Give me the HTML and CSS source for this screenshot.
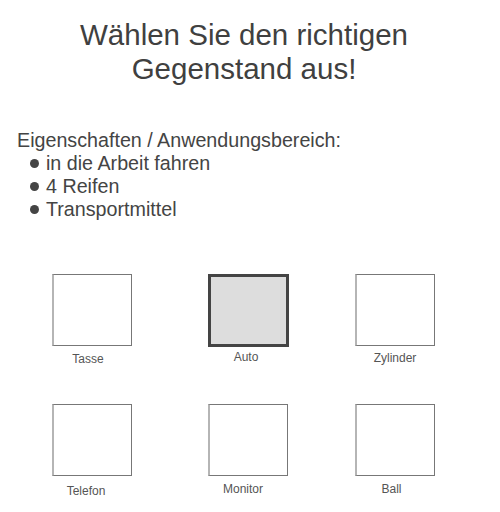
FILE: index.html
```html
<!DOCTYPE html>
<html lang="de">
<head>
<meta charset="utf-8">
<link rel="stylesheet" href="styles.css">
</head>
<body>
<div class="page">
  <h1 class="title">Wählen Sie den richtigen<br>Gegenstand aus!</h1>
  <div class="props">
    <p class="props-head">Eigenschaften / Anwendungsbereich:</p>
    <ul class="props-list">
      <li>in die Arbeit fahren</li>
      <li>4 Reifen</li>
      <li>Transportmittel</li>
    </ul>
  </div>
  <div class="choices">
    <div class="choice"><div class="box"></div><span class="label l-tasse">Tasse</span></div>
    <div class="choice"><div class="box selected"></div><span class="label l-auto">Auto</span></div>
    <div class="choice"><div class="box"></div><span class="label l-zyl">Zylinder</span></div>
    <div class="choice"><div class="box"></div><span class="label l-tel">Telefon</span></div>
    <div class="choice"><div class="box"></div><span class="label l-mon">Monitor</span></div>
    <div class="choice"><div class="box"></div><span class="label l-ball">Ball</span></div>
  </div>
</div>
</body>
</html>
```

FILE: styles.css
```css
html, body {
  margin: 0;
  padding: 0;
  background: #ffffff;
}
body {
  font-family: "Liberation Sans", Arial, sans-serif;
  color: #444444;
}
.page {
  width: 500px;
  height: 512px;
  overflow: hidden;
}
.title {
  width: 488px;
  margin: 18px 0 0 0;
  font-size: 29.5px;
  font-weight: normal;
  line-height: 34px;
  text-align: center;
  color: #404040;
}
.props {
  margin: 43px 0 0 17px;
  font-size: 19.7px;
  line-height: 23px;
}
.props-head {
  margin: 0;
}
.props-list {
  margin: 0;
  padding: 0 0 0 13px;
  list-style: none;
}
.props-list li {
  display: flex;
  align-items: center;
  gap: 7px;
}
.props-list li::before {
  content: "";
  width: 9px;
  height: 9px;
  border-radius: 50%;
  background: #444444;
}
.choices {
  display: grid;
  grid-template-columns: 156px 147px 80px;
  grid-auto-rows: 130px;
  margin: 53px 0 0 52px;
}
.choice {
  width: 80px;
  display: flex;
  flex-direction: column;
  align-items: center;
}
.box {
  width: 80px;
  height: 72px;
  box-sizing: border-box;
  border: 1px solid #777777;
  border-left: 2px solid #b5b5b5;
  background: #ffffff;
}
.box.selected {
  border: 3px solid #444444;
  background: #dddddd;
  width: 81px;
  height: 73px;
}
.label {
  font-size: 12px;
  line-height: 14px;
  color: #555555;
  margin-top: 6px;
  white-space: nowrap;
}
.l-tasse { margin-left: -8px; }
.l-auto { margin-top: 3px; margin-left: -4px; }
.l-zyl { margin-top: 5px; }
.l-tel { margin-top: 8px; margin-left: -12px; }
.l-mon { margin-top: 6px; margin-left: -10px; }
.l-ball { margin-top: 6px; margin-left: -7px; }
```
